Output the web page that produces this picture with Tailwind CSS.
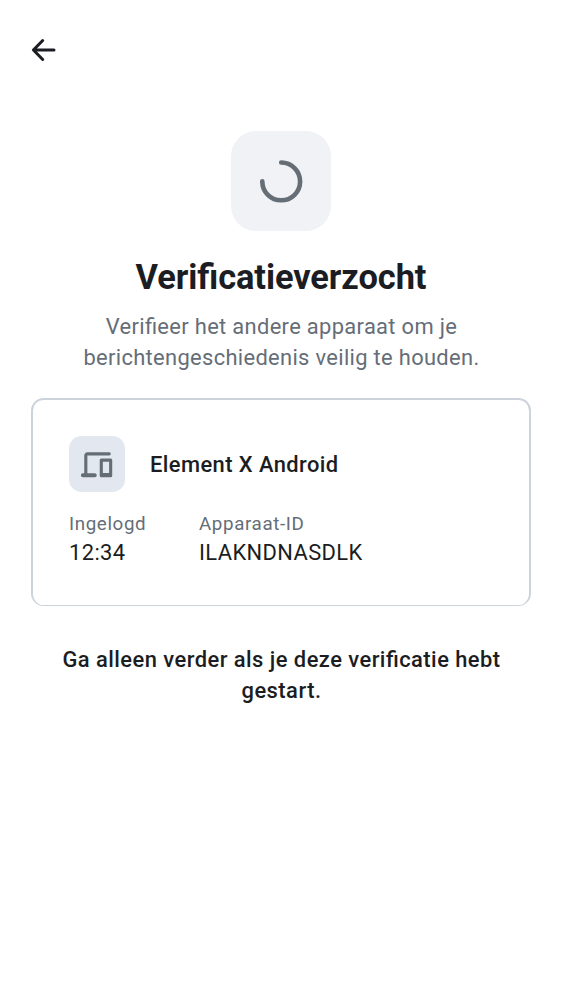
<!DOCTYPE html>
<html lang="nl"><head><meta charset="utf-8"><title>Verificatieverzocht</title>
<script src="https://cdn.jsdelivr.net/npm/@tailwindcss/browser@4"></script></head>
<body class="bg-white text-[#1b1d22] font-['Roboto',sans-serif] [font-feature-settings:'liga'_1] antialiased">
<main class="flex h-[1000px] flex-col px-[31px]">
<header class="flex h-[100px] items-center"><button aria-label="Terug"><svg class="block size-[25px]" viewBox="0 0 25 25" fill="none" stroke="currentColor" stroke-width="3" stroke-linecap="round" stroke-linejoin="round"><path d="M11.7 2.5 2.4 12 11.7 21.5M2.6 12H23"/></svg></button></header>
<section class="flex flex-col items-center pt-[31px] text-center">
<div class="flex size-[100px] items-center justify-center rounded-[25px] bg-[#f0f2f5]"><svg class="size-[50px]" viewBox="0 0 50 50" fill="none" stroke="#656d77" stroke-width="4.6" stroke-linecap="round"><path d="M25.2 6.5A18.9 18.9 0 1 1 6.3 25.4"/></svg></div>
<h1 class="mt-[25px] text-[34.4px] font-bold leading-[42px] tracking-[-0.08px] whitespace-nowrap">Verificatieverzocht</h1>
<p class="mt-[13px] pl-px text-[21.9px] leading-[31.2px] tracking-[0.33px] text-[#656d77] whitespace-nowrap">Verifieer het andere apparaat om je<br>berichtengeschiedenis veilig te houden.</p>
</section>
<section class="mt-[25px] h-[208px] rounded-[12.5px] border-x-2 border-t-2 border-b border-[#cdd3da] px-[36px] pt-[36px]">
<div class="flex items-center gap-[25px]"><div class="flex size-[56px] items-center justify-center rounded-[12.5px] bg-[#e3e7f0]"><svg class="size-[37.5px]" viewBox="0 0 24 24" fill="#656d77"><path d="M3.15 20a1.3 1.3 0 0 1 0-2.6H4V6c0-1.1.9-2 2-2h14a1 1 0 1 1 0 2H6v11.4h4.7a1.3 1.3 0 0 1 0 2.6zM14.9 20a1 1 0 0 1-1-1V9a1 1 0 0 1 1-1h6a1 1 0 0 1 1 1v10a1 1 0 0 1-1 1zm1-2.8h4V10h-4z"/></svg></div><h2 class="pt-[2px] text-[21.9px] font-medium tracking-[0.43px]">Element X Android</h2></div>
<dl class="mt-[20px] flex"><div class="w-[130px]"><dt class="text-[18.75px] leading-[25px] tracking-[0.62px] text-[#656d77]">Ingelogd</dt><dd class="text-[21.9px] leading-[32px] tracking-[0.39px]">12:34</dd></div><div><dt class="text-[18.75px] leading-[25px] tracking-[0.62px] text-[#656d77]">Apparaat-ID</dt><dd class="text-[21.9px] leading-[32px] tracking-[0.39px]">ILAKNDNASDLK</dd></div></dl>
</section>
<p class="mt-[38px] text-center text-[21.9px] font-medium leading-[31px] tracking-[0.47px] whitespace-nowrap pl-px">Ga alleen verder als je deze verificatie hebt<br>gestart.</p>
</main></body></html>
